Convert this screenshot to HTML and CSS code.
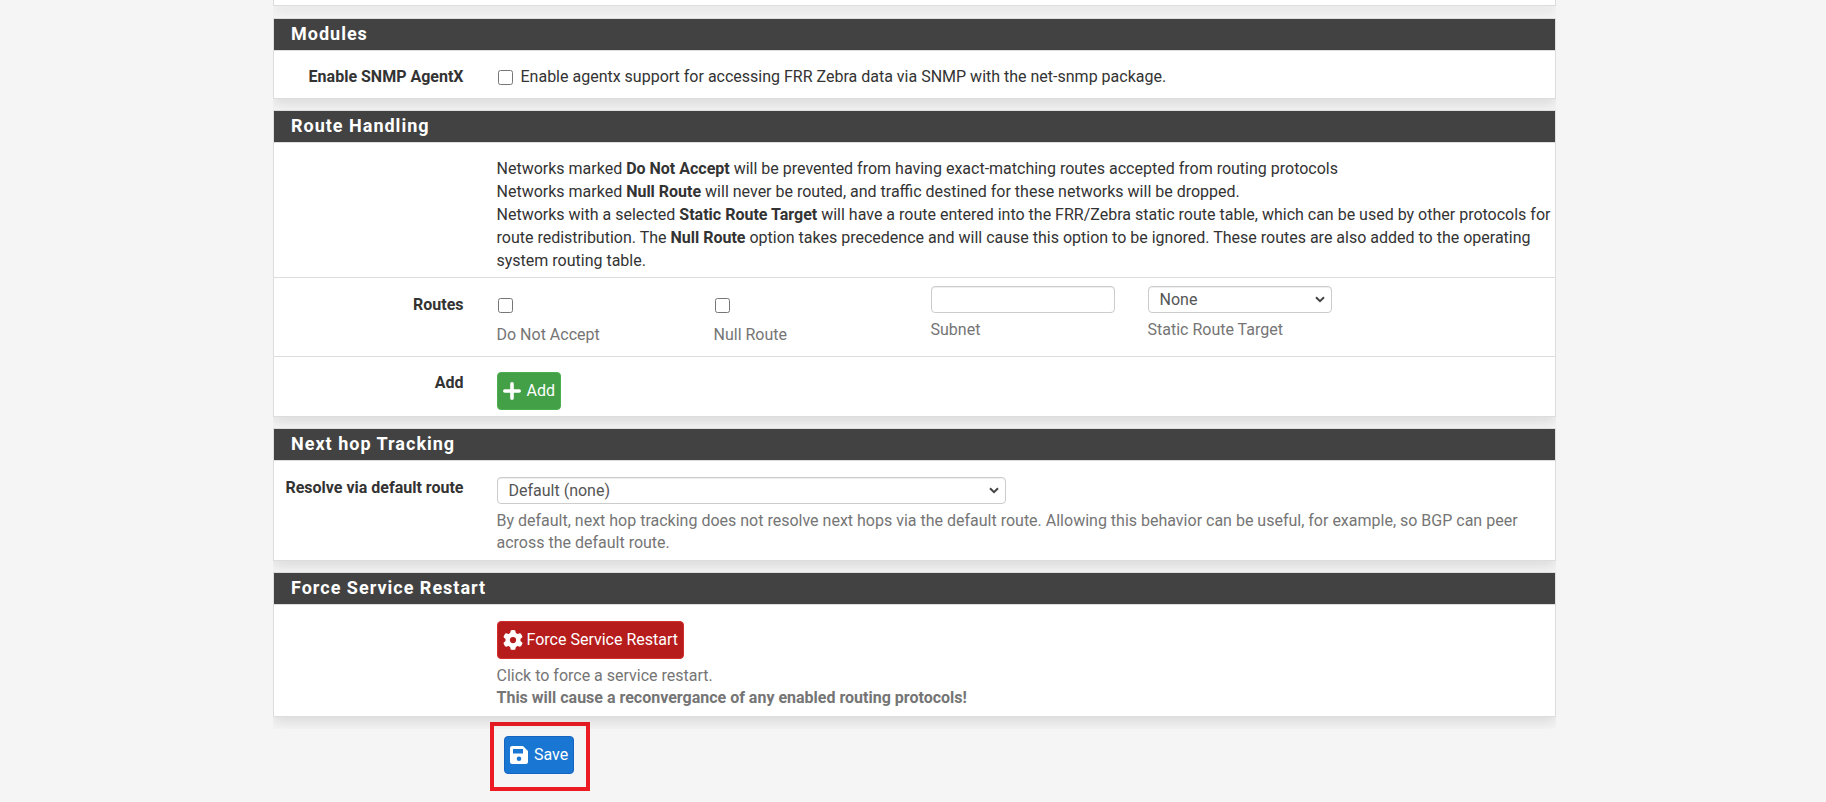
FILE: index.html
```html
<!DOCTYPE html>
<html lang="en">
<head>
<meta charset="utf-8">
<title>FRR Global Settings</title>
<link rel="stylesheet" href="styles.css">
</head>
<body>
<form class="container">
  <div class="panel panel-tail"></div>

  <section class="panel">
    <h2 class="panel-title">Modules</h2>
    <div class="row row-compact">
      <label class="row-label" for="agentx">Enable SNMP AgentX</label>
      <div class="row-body">
        <label class="check-line"><input class="check" type="checkbox" id="agentx"><span>Enable agentx support for accessing FRR Zebra data via SNMP with the net-snmp package.</span></label>
      </div>
    </div>
  </section>

  <section class="panel">
    <h2 class="panel-title">Route Handling</h2>
    <div class="row row-text">
      <span class="row-label"></span>
      <div class="row-body">
        Networks marked <b>Do Not Accept</b> will be prevented from having exact-matching routes accepted from routing protocols<br>
        Networks marked <b>Null Route</b> will never be routed, and traffic destined for these networks will be dropped.<br>
        Networks with a selected <b>Static Route Target</b> will have a route entered into the FRR/Zebra static route table, which can be used by other protocols for route redistribution. The <b>Null Route</b> option takes precedence and will cause this option to be ignored. These routes are also added to the operating system routing table.
      </div>
    </div>
    <div class="row row-routes">
      <span class="row-label">Routes</span>
      <div class="row-body route-grid">
        <div class="route-check"><input class="check" type="checkbox" id="deny"><label class="help" for="deny">Do Not Accept</label></div>
        <div class="route-check"><input class="check" type="checkbox" id="nullroute"><label class="help" for="nullroute">Null Route</label></div>
        <div class="route-field"><input class="control" type="text" id="subnet"><label class="help" for="subnet">Subnet</label></div>
        <div class="route-field">
          <div class="select-wrap"><select class="control" id="target"><option>None</option></select><svg class="chevron" viewBox="0 0 10 7"><path d="M1 1.2l4 4 4-4"/></svg></div>
          <label class="help" for="target">Static Route Target</label>
        </div>
      </div>
    </div>
    <div class="row row-add">
      <span class="row-label">Add</span>
      <div class="row-body">
        <button class="btn btn-success" type="button"><svg class="icon" viewBox="0 0 18 18"><path d="M9 1.800v14.400M1.800 9h14.400" fill="none" stroke="currentColor" stroke-width="3.600" stroke-linecap="round"/></svg><span>Add</span></button>
      </div>
    </div>
  </section>

  <section class="panel">
    <h2 class="panel-title">Next hop Tracking</h2>
    <div class="row">
      <label class="row-label" for="resolve">Resolve via default route</label>
      <div class="row-body">
        <div class="select-wrap select-wide"><select class="control" id="resolve"><option>Default (none)</option></select><svg class="chevron" viewBox="0 0 10 7"><path d="M1 1.2l4 4 4-4"/></svg></div>
        <p class="help">By default, next hop tracking does not resolve next hops via the default route. Allowing this behavior can be useful, for example, so BGP can peer across the default route.</p>
      </div>
    </div>
  </section>

  <section class="panel">
    <h2 class="panel-title">Force Service Restart</h2>
    <div class="row row-restart">
      <span class="row-label"></span>
      <div class="row-body">
        <button class="btn btn-danger" type="button"><svg class="icon icon-gear" viewBox="0 0 512 512"><path fill="currentColor" d="M495.9 166.6c3.200 8.700.5 18.400-6.400 24.600l-43.300 39.400c1.100 8.300 1.700 16.800 1.700 25.400s-.6 17.100-1.700 25.400l43.300 39.400c6.900 6.200 9.600 15.900 6.400 24.600c-4.400 11.900-9.700 23.300-15.800 34.300l-4.700 8.100c-6.600 11-14 21.400-22.100 31.200c-5.900 7.200-15.700 9.600-24.500 6.800l-55.700-17.700c-13.400 10.300-28.200 18.900-44 25.400l-12.500 57.100c-2 9.100-9 16.300-18.200 17.800c-13.800 2.300-28 3.500-42.500 3.500s-28.700-1.200-42.500-3.500c-9.200-1.500-16.200-8.700-18.200-17.800l-12.500-57.100c-15.800-6.500-30.600-15.100-44-25.400L83.100 425.900c-8.800 2.800-18.600.3-24.500-6.800c-8.100-9.800-15.500-20.200-22.100-31.200l-4.700-8.100c-6.100-11-11.400-22.400-15.800-34.300c-3.200-8.700-.5-18.400 6.400-24.600l43.300-39.400C64.600 273.100 64 264.600 64 256s.6-17.100 1.700-25.400L22.400 191.200c-6.900-6.200-9.600-15.900-6.400-24.600c4.400-11.900 9.700-23.300 15.800-34.300l4.700-8.100c6.600-11 14-21.400 22.100-31.200c5.900-7.200 15.700-9.600 24.500-6.800l55.700 17.700c13.400-10.300 28.200-18.900 44-25.400l12.500-57.100c2-9.100 9-16.300 18.200-17.800C227.300 1.200 241.500 0 256 0s28.700 1.200 42.500 3.500c9.200 1.500 16.200 8.700 18.200 17.800l12.500 57.100c15.800 6.500 30.600 15.100 44 25.400l55.700-17.700c8.800-2.800 18.600-.3 24.500 6.800c8.100 9.800 15.500 20.200 22.100 31.200l4.700 8.100c6.100 11 11.400 22.400 15.800 34.300zM256 336a80 80 0 1 0 0-160 80 80 0 1 0 0 160z"/></svg><span>Force Service Restart</span></button>
        <p class="help">Click to force a service restart.<br><b>This will cause a reconvergance of any enabled routing protocols!</b></p>
      </div>
    </div>
  </section>

  <div class="actions">
    <div class="highlight">
      <button class="btn btn-primary" type="submit"><svg class="icon" viewBox="0 0 18 18"><path fill="currentColor" fill-rule="evenodd" d="M2 0h11l5 5v11a2 2 0 0 1-2 2H2a2 2 0 0 1-2-2V2a2 2 0 0 1 2-2zM3 3v4.500h10V3zM9 10.500a2.300 2.300 0 1 0 0 4.600 2.300 2.300 0 0 0 0-4.600z"/></svg><span>Save</span></button>
    </div>
  </div>
</form>
</body>
</html>
```
FILE: styles.css
```css
* {
  box-sizing: border-box;
}

body {
  margin: 0;
  padding-left: 3px;
  background: #f5f5f5;
  color: #333;
  font: 400 16px/22px Roboto, "Liberation Sans", sans-serif;
}

.container {
  max-width: 1283px;
  margin: 0 auto;
}

.panel {
  margin-bottom: 11px;
  border: 1px solid #ddd;
  background: #fff;
  box-shadow: 0 6px 12px #0000001a;
  clip-path: inset(0 0 -12px 0);
}

.panel-tail {
  height: 6px;
  margin-bottom: 12px;
  border-top: 0;
}

.panel-title {
  margin: 0;
  padding: 4px 17px 5px;
  border-bottom: 1px solid #ddd;
  background: #424242;
  color: #fff;
  font-size: 18px;
  font-weight: 700;
  line-height: 22px;
  letter-spacing: 1px;
}

.row {
  display: grid;
  grid-template-columns: 2fr 10fr;
  padding: 16px 0 6px;
}

.row + .row {
  border-top: 1px solid #ddd;
}

.row-compact {
  padding: 15px 0 10px;
}

.row-text {
  padding: 14px 0 5px;
  line-height: 23px;
}

.row-routes {
  padding: 8px 0 10px;
}

.row-routes .row-label {
  padding-top: 8px;
}

.row-add {
  padding-top: 15px;
}

.row-restart {
  padding: 16px 0 7px;
}

.row-label {
  padding-right: 24px;
  font-weight: 700;
  text-align: right;
}

.row-body {
  padding: 0 9px;
}

.row-text .row-body {
  padding-right: 0;
}

.help {
  display: block;
  margin: 6px 0 0;
  color: #757575;
}

.check {
  width: 15px;
  height: 15px;
  margin: 0 1px;
}

.check-line {
  display: flex;
  align-items: center;
  gap: 7px;
}

.route-grid {
  display: grid;
  grid-template-columns: repeat(4, minmax(0, 184px));
  gap: 33px;
}

.route-check {
  padding-top: 12px;
}

.route-check .check {
  display: block;
}

.route-check .help {
  margin-top: 11px;
}

.control {
  display: block;
  width: 100%;
  height: 27px;
  padding: 0 11px;
  appearance: none;
  border: 1px solid #ccc;
  border-radius: 4px;
  background: #fff;
  box-shadow: inset 0 1px 1px #00000013;
  color: #555;
  font: inherit;
}

.select-wrap {
  display: grid;
  align-items: center;
}

.select-wrap > * {
  grid-area: 1 / 1;
}

.select-wide {
  max-width: 509px;
}

.chevron {
  justify-self: end;
  width: 10px;
  height: 7px;
  margin-right: 7px;
  fill: none;
  stroke: #444;
  stroke-width: 2;
  pointer-events: none;
}

.btn {
  display: flex;
  align-items: center;
  gap: 6px;
  height: 38px;
  padding: 0 5px;
  border: 1px solid;
  border-radius: 4px;
  color: #fff;
  font: inherit;
}

.icon {
  width: 18px;
  height: 18px;
}

.icon-gear {
  width: 20px;
  height: 20px;
}

.btn-success {
  border-color: #4caf50;
  background: #43a047;
}

.btn-danger {
  gap: 4px;
  border-color: #d32f2f;
  background: #b71c1c;
}

.btn-primary {
  border-color: #1565c0;
  background: #1976d2;
}

.actions {
  display: flex;
  margin-top: -6px;
  padding-left: 217px;
}

.highlight {
  padding: 10px 12px 13px 10px;
  border: 4px solid #ed1c24;
}
```
